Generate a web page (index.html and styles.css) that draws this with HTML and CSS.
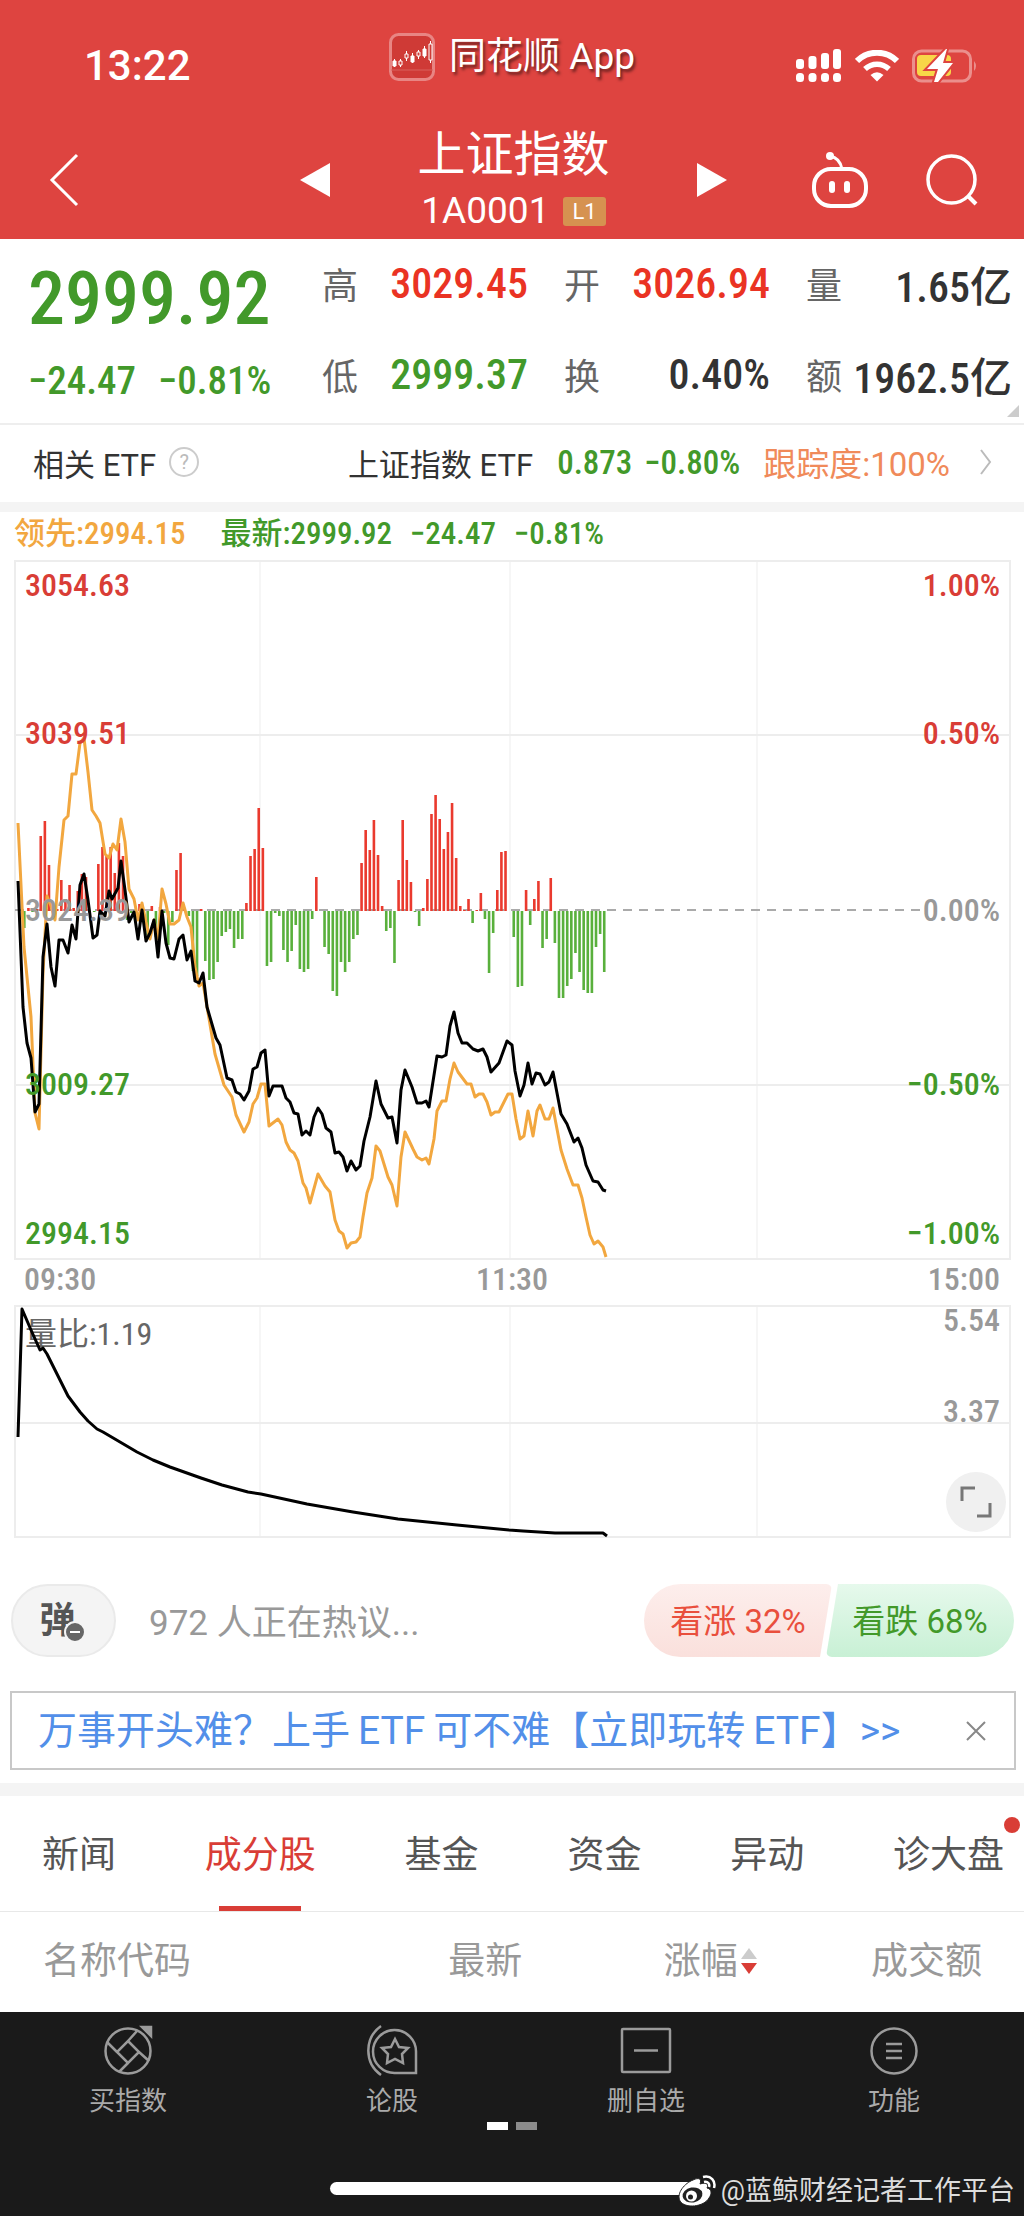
FILE: index.html
```html
<!DOCTYPE html>
<html lang="zh-CN">
<head>
    <meta charset="UTF-8">
    <meta name="viewport" content="width=device-width, initial-scale=1.0">
    <title>上证指数 1A0001</title>
    <link rel="stylesheet" href="styles.css">
</head>
<body>
    <header class="top">
        <div class="status">
            <span class="time">13:22</span>
            <div class="brand">
                <svg class="brand-logo" viewBox="0 0 46 48" width="46" height="48">
                    <rect x="1.5" y="1.5" width="43" height="45" rx="8" fill="#cf3a36" stroke="#e88583" stroke-width="3"/>
                    <path d="M2 37h42" stroke="#d9605c"/>
                    <g stroke="#fff" fill="none">
                        <path d="M5.500 26v8M11.500 26v8M17.500 18v10M23.500 20v10M29.500 17v9M35.500 13v12M41.500 8v22"/>
                        <path d="M4 28h3v5h-3zM22 23h3v6h-3zM34 16h3v7h-3z" fill="#fff"/>
                        <path d="M10 28h3v4h-3zM16 21h3v4h-3zM28 19h3v4h-3zM40 11h3v16h-3z" fill="#cf3a36"/>
                    </g>
                </svg>
                <span>同花顺 App</span>
            </div>
            <div class="status-icons">
                <svg viewBox="0 0 46 34" width="46" height="34" fill="#fff">
                    <rect x="0" y="10" width="8" height="10" rx="3"/>
                    <rect x="12.500" y="7" width="8" height="13" rx="3"/>
                    <rect x="25" y="4" width="8" height="16" rx="3"/>
                    <rect x="37" y="0" width="8" height="20" rx="3"/>
                    <rect x="0" y="24" width="8" height="9" rx="3.500"/>
                    <rect x="12.500" y="24" width="8" height="9" rx="3.500"/>
                    <rect x="25" y="24" width="8" height="9" rx="3.500"/>
                    <rect x="37" y="24" width="8" height="9" rx="3.500"/>
                </svg>
                <svg viewBox="0 0 44 32" width="44" height="32">
                    <path d="M2 11C13 0 31 0 42 11" fill="none" stroke="#fff" stroke-width="6"/>
                    <path d="M10 19C17 12.500 27 12.500 34 19" fill="none" stroke="#fff" stroke-width="5.500"/>
                    <path d="M15.500 25Q22 19.500 28.500 25L22 31.500z" fill="#fff"/>
                </svg>
                <svg viewBox="0 0 66 34" width="66" height="34">
                    <rect x="1.500" y="2" width="57" height="30" rx="8" fill="none" stroke="#eb8f8c" stroke-width="3"/>
                    <path d="M62 12q4 5 0 10z" fill="#eb8f8c"/>
                    <rect x="5" y="6" width="34" height="21" rx="4" fill="#f8d648"/>
                    <path d="M34 0L15 20h11l-4 13h4L41 14H31l4-14z" fill="#fff" stroke="#de4440" stroke-width="4" paint-order="stroke"/>
                </svg>
            </div>
        </div>
        <nav class="nav">
            <button aria-label="返回">
                <svg viewBox="0 0 30 54" width="30" height="54"><path d="M28 2L3 27l25 25" fill="none" stroke="#fff" stroke-width="3"/></svg>
            </button>
            <div class="nav-center">
                <button aria-label="上一个">
                    <svg viewBox="0 0 30 34" width="30" height="34"><path d="M30 0v34L0 17z" fill="#fff"/></svg>
                </button>
                <div class="nav-title">
                    <h1>上证指数</h1>
                    <p>1A0001 <span class="level">L1</span></p>
                </div>
                <button aria-label="下一个">
                    <svg viewBox="0 0 30 34" width="30" height="34"><path d="M0 0v34l30-17z" fill="#fff"/></svg>
                </button>
            </div>
            <div class="nav-tools">
                <button aria-label="助手">
                    <svg viewBox="0 0 56 56" width="56" height="56">
                        <rect x="2" y="17" width="52" height="37" rx="17" fill="none" stroke="#fff" stroke-width="4"/>
                        <path d="M18 4q10 2 12 13" fill="none" stroke="#fff" stroke-width="3"/>
                        <circle cx="18" cy="4" r="4" fill="#fff"/>
                        <rect x="17" y="29" width="6" height="12" rx="3" fill="#fff"/>
                        <rect x="32" y="29" width="6" height="12" rx="3" fill="#fff"/>
                    </svg>
                </button>
                <button aria-label="搜索">
                    <svg viewBox="0 0 52 52" width="52" height="52">
                        <circle cx="25.500" cy="25.500" r="23.500" fill="none" stroke="#fff" stroke-width="3.500"/>
                        <path d="M42 42l8 8" stroke="#fff" stroke-width="4"/>
                    </svg>
                </button>
            </div>
        </nav>
    </header>

    <section class="quote">
        <div class="price">
            <strong>2999.92</strong>
            <p><span>−24.47</span><span>−0.81%</span></p>
        </div>
        <dl class="stats">
            <div><dt>高</dt><dd class="up">3029.45</dd></div>
            <div><dt>开</dt><dd class="up">3026.94</dd></div>
            <div><dt>量</dt><dd>1.65亿</dd></div>
            <div><dt>低</dt><dd class="down">2999.37</dd></div>
            <div><dt>换</dt><dd>0.40%</dd></div>
            <div><dt>额</dt><dd>1962.5亿</dd></div>
        </dl>
        <span class="corner"></span>
    </section>

    <a class="etf" href="#">
        <span>相关 ETF</span>
        <span class="help">?</span>
        <span class="etf-name">上证指数 ETF</span>
        <span class="etf-num"><span>0.873</span><span>−0.80%</span></span>
        <span class="track">跟踪度:100%</span>
        <svg viewBox="0 0 12 26" width="12" height="26"><path d="M1 1l9 12-9 12" fill="none" stroke="#bbb" stroke-width="2"/></svg>
    </a>

    <section class="charts">
        <p class="legend">
            <span class="lead">领先:2994.15</span>
            <span class="last"><span>最新:2999.92</span><span>−24.47</span><span>−0.81%</span></span>
        </p>
        <svg class="chart" viewBox="0 0 1024 706">
            <g class="grid">
                <path d="M15 5H1010V703H15zM15 179H1010M15 529H1010"/>
                <path class="thin" d="M260 5V703M510 5V703M757 5V703"/>
            </g>
            <path class="zero" d="M15 354H922"/>
            <g id="bars"></g>
            <polyline class="line lead-line" points="18,267 24,391 31,461 35,557 39,573 43,417 47,340 51,350 55,364 59,311 64,264 68,260 72,218 76,218 80,187 84,182 88,216 92,254 96,260 100,267 105,298 109,302 113,288 117,294 121,263 125,286 129,333 134,343 138,364 142,347 146,366 150,383 154,364 158,383 162,333 166,348 170,368 174,368 179,364 183,347 187,361 191,371 195,411 199,430 203,427 215,498 224,529 232,541 236,559 244,576 249,566 253,548 257,542 261,528 265,528 269,570 278,563 282,569 286,586 290,594 294,597 298,605 303,627 306,632 310,647 318,618 325,630 330,636 335,664 339,675 343,678 347,692 351,687 356,686 360,681 363,661 367,637 372,622 376,590 380,595 388,621 392,629 397,650 401,601 405,576 413,593 417,601 422,604 426,602 429,608 434,583 437,555 442,545 446,545 450,523 454,507 458,516 467,528 471,528 475,541 479,538 483,538 487,546 491,559 495,556 499,556 508,538 512,538 516,563 520,583 524,580 528,555 533,580 537,555 540,549 545,563 549,563 553,552 561,594 567,613 573,629 578,629 582,642 586,661 590,679 594,688 598,685 603,691 606,701"/>
            <polyline class="line last-line" points="18,325 23,451 27,487 31,502 35,556 39,548 43,401 47,368 51,411 55,430 59,384 63,384 68,397 72,369 76,383 80,329 84,318 88,344 93,382 97,379 100,355 105,360 109,335 112,343 118,332 121,305 125,334 129,366 134,356 138,383 142,354 146,385 150,377 154,364 158,401 162,355 166,387 170,402 174,403 179,383 183,379 187,404 191,395 195,425 199,427 203,417 207,451 216,482 220,489 227,522 232,524 236,536 240,538 244,544 249,535 253,513 257,511 261,497 265,494 269,540 273,530 282,530 286,542 290,546 294,557 298,558 302,579 306,575 310,579 314,561 318,552 322,558 326,572 331,576 335,597 339,596 343,601 347,615 351,605 356,614 360,610 364,585 370,561 376,525 381,548 388,562 392,561 397,587 401,534 405,514 412,531 417,547 422,547 426,545 429,551 437,500 442,501 446,499 450,470 454,456 458,477 462,487 467,487 473,493 478,495 483,493 487,501 491,516 499,507 507,485 512,489 515,515 520,540 524,529 528,507 532,528 536,517 540,518 545,529 549,526 553,516 561,558 567,568 574,586 578,582 582,592 586,609 593,625 598,626 603,634 606,635"/>
            <g class="scale">
                <text class="up" x="25" y="40">3054.63</text>
                <text class="up" x="25" y="188">3039.51</text>
                <text class="flat" x="25" y="365">3024.39</text>
                <text class="down" x="25" y="539">3009.27</text>
                <text class="down" x="25" y="688">2994.15</text>
            </g>
            <g class="scale scale-right">
                <text class="up" x="1000" y="40">1.00%</text>
                <text class="up" x="1000" y="188">0.50%</text>
                <text class="flat" x="1000" y="365">0.00%</text>
                <text class="down" x="1000" y="539">−0.50%</text>
                <text class="down" x="1000" y="688">−1.00%</text>
            </g>
        </svg>
        <div class="times"><span>09:30</span><span>11:30</span><span>15:00</span></div>
        <div class="ratio">
            <svg class="chart" viewBox="0 0 1024 240">
                <g class="grid">
                    <path d="M15 6H1010V237H15zM15 123H1010"/>
                    <path class="thin" d="M260 6V237M510 6V237M757 6V237"/>
                </g>
                <g class="scale">
                    <text class="ratio-name" x="25" y="45">量比:1.19</text>
                </g>
                <g class="scale scale-right">
                    <text class="flat" x="1000" y="31">5.54</text>
                    <text class="flat" x="1000" y="122">3.37</text>
                </g>
                <polyline class="line last-line" points="18,137 22,9 31,30 40,50 43,48 47,54 59,78 68,96 80,112 88,121 97,129 103,132 120,142 137,152 153,160 170,167 201,178 222,185 248,192 261,194 307,204 353,212 398,219 457,225 509,230 523,231 555,233 603,233 607,236"/>
            </svg>
            <button class="expand" aria-label="全屏">
                <svg viewBox="0 0 32 32" width="32" height="32"><path d="M2 15V2h13M30 17v13H17" fill="none" stroke="#777" stroke-width="3"/></svg>
            </button>
        </div>
    </section>

    <section class="talk">
        <button class="danmu">弹
            <svg viewBox="0 0 22 22" width="22" height="22"><circle cx="11" cy="11" r="10" fill="#666" stroke="#f4f4f4" stroke-width="2"/><path d="M6 11h10" stroke="#fff" stroke-width="2"/></svg>
        </button>
        <p>972 人正在热议...</p>
        <div class="vote">
            <button class="bull">看涨 32%</button>
            <button class="bear">看跌 68%</button>
        </div>
    </section>

    <aside class="ad">
        <a href="#">万事开头难？上手&thinsp;ETF&thinsp;可不难【立即玩转&thinsp;ETF】&gt;&gt;</a>
        <button aria-label="关闭">
            <svg viewBox="0 0 20 20" width="20" height="20"><path d="M1 1l18 18M19 1L1 19" stroke="#888" stroke-width="2"/></svg>
        </button>
    </aside>

    <nav class="tabs">
        <a href="#">新闻</a>
        <a href="#" class="active">成分股</a>
        <a href="#">基金</a>
        <a href="#">资金</a>
        <a href="#">异动</a>
        <a href="#" class="has-dot">诊大盘</a>
    </nav>

    <table class="list">
        <thead>
            <tr>
                <th class="name">名称代码</th>
                <th class="latest">最新</th>
                <th class="sorted">涨幅<svg viewBox="0 0 18 26" width="18" height="26"><path d="M9 0l8 11H1z" fill="#ccc"/><path d="M9 26l8-11H1z" fill="#d93d36"/></svg></th>
                <th>成交额</th>
            </tr>
        </thead>
    </table>

    <footer class="bottom">
        <div class="tools">
            <button>
                <svg viewBox="0 0 52 52" width="52" height="52">
                    <circle cx="26" cy="27" r="22.500"/>
                    <path d="M26 17l11 11-11 11-11-11zM26 17l9-10M37 28l10 9M26 39l-9 9M15 28L5 18"/>
                    <path d="M40 3h9v9z" fill="#9b9b9b"/>
                </svg>
                <span>买指数</span>
            </button>
            <button>
                <svg viewBox="0 0 52 52" width="52" height="52">
                    <path d="M29 49h21V28a21.500 21.500 0 1 0-21 21z"/>
                    <path d="M15 2a30 30 0 0 0 0 49"/>
                    <path d="M29 15l4 8 9 1-6 6 1 9-8-4-8 4 1-9-6-6 9-1z"/>
                </svg>
                <span>论股</span>
            </button>
            <button>
                <svg viewBox="0 0 52 52" width="52" height="52">
                    <rect x="2" y="5" width="48" height="43" rx="1"/>
                    <path d="M14 26.500h24"/>
                </svg>
                <span>删自选</span>
            </button>
            <button>
                <svg viewBox="0 0 52 52" width="52" height="52">
                    <circle cx="26" cy="27" r="22.500"/>
                    <path d="M18 20h16M18 27h16M18 34h16"/>
                </svg>
                <span>功能</span>
            </button>
        </div>
        <div class="pages"><i class="on"></i><i></i></div>
        <div class="home-bar"></div>
        <div class="watermark">
            <svg viewBox="0 0 38 32" width="38" height="32">
                <path d="M15 5c6-3 9-1 7 4 6-2 9 0 7 4 5 1 5 6 2 10-5 9-24 11-29 3C-2 18 7 8 15 5z" fill="#fff" stroke="#222" stroke-width="1"/>
                <ellipse cx="14.500" cy="20" rx="10" ry="7.500" fill="#222" transform="rotate(-10 14.500 20)"/>
                <circle cx="13.500" cy="21" r="5.500" fill="#fff"/>
                <circle cx="12.500" cy="22" r="2.500" fill="#222"/>
                <path d="M26 7c4-1 6 2 5 5M25 2c8-2 13 4 11 11" fill="none" stroke="#fff" stroke-width="2.500"/>
            </svg>
            <span>@蓝鲸财经记者工作平台</span>
        </div>
    </footer>

    <script>
        // one bar per minute: above zero red, below zero green
        const minutes = [
            -17, 3, -1, 2, 75, 90, 46, 0, 2, 31, 12, 26, 3, 20, 37, 34, 0, -1, 47, 64,
            55, 64, 38, 68, 55, -9, -2, -1, 7, -2, -24, 5, -26, 4, -2, -34, -11, 41, 58, 3,
            -5, -60, -65, 2, -50, -69, -68, -51, -25, -21, -18, -37, -28, -28, 8, 55, 62, 103, 63, -55,
            -51, -2, -5, -39, -51, -40, -14, -58, -61, -58, -8, 34, 0, -36, -43, -80, -85, -51, -61, -51,
            -28, -24, 48, 81, 61, 91, 56, 5, -20, -17, -52, 31, 91, 51, 29, -1, -15, 3, 32, 97,
            116, 92, 62, 79, 108, 53, 5, 1, 12, -12, 1, 18, -8, -62, -22, 21, 59, 60, 0, -26,
            -76, -75, 21, -14, 12, 30, -37, -28, 33, -32, -87, -87, -75, -68, -42, -61, -79, -82, -82, -36,
            -23, -61
        ];
        const zeroY = 355;
        const step = 4.113;
        const bars = document.getElementById("bars");

        minutes.forEach((value, i) => {
            const bar = document.createElementNS("http://www.w3.org/2000/svg", "rect");
            bar.setAttribute("x", 23 + i * step);
            bar.setAttribute("y", value > 0 ? zeroY - value : zeroY);
            bar.setAttribute("width", 2.6);
            bar.setAttribute("height", Math.abs(value));
            bar.setAttribute("fill", value > 0 ? "#ea3a2e" : "#59b03c");
            bars.appendChild(bar);
        });
    </script>
</body>
</html>
```
FILE: styles.css
```css
:root {
    --red: #de4440;
    --up: #d93d36;
    --down: #42992a;
    --num: "Roboto Condensed", "Liberation Sans Narrow", Roboto, "Noto Sans CJK SC", sans-serif;
}
* {
    box-sizing: border-box;
}
body {
    margin: 0;
    background: #fff;
    color: #333;
    font-family: Roboto, "Noto Sans CJK SC", sans-serif;
    font-size: 31px;
}
h1, p, dl, dd {
    margin: 0;
}
a {
    color: inherit;
    text-decoration: none;
}
button {
    padding: 0;
    border: none;
    background: none;
    color: inherit;
    font: inherit;
    cursor: pointer;
}
svg {
    display: block;
}

/* header */
.top {
    background: var(--red);
    color: #fff;
}
.status {
    display: grid;
    grid-template-columns: 1fr auto 1fr;
    align-items: center;
    height: 121px;
    padding: 10px 46px 0 84px;
}
.time {
    font-size: 42px;
    font-weight: 500;
}
.brand {
    display: flex;
    align-items: center;
    gap: 14px;
    margin: 0 38px 18px 0;
    font-size: 37px;
    line-height: 48px;
    text-shadow: 2px 3px 3px rgba(0, 0, 0, 0.5);
}
.status-icons {
    display: flex;
    justify-content: flex-end;
    align-items: center;
    gap: 13px;
}
.nav {
    display: grid;
    grid-template-columns: 1fr 428px 1fr;
    align-items: center;
    justify-items: start;
    height: 118px;
    padding: 0 46px 0 49px;
}
.nav-center {
    display: flex;
    justify-content: space-between;
    align-items: center;
    width: 100%;
}
.nav-title {
    padding-top: 4px;
    text-align: center;
}
.nav-title h1 {
    font-size: 48px;
    font-weight: 400;
    line-height: 58px;
}
.nav-title p {
    display: flex;
    justify-content: center;
    align-items: center;
    gap: 14px;
    font-size: 37px;
    line-height: 54px;
}
.level {
    padding: 0 9px;
    border-radius: 3px;
    background: #d69250;
    font-size: 22px;
    line-height: 29px;
}
.nav-tools {
    display: flex;
    justify-self: end;
    align-items: center;
    gap: 58px;
}

/* quote */
.up {
    color: #ea3323;
    fill: var(--up);
}
.down {
    color: var(--down);
    fill: var(--down);
}
.flat {
    fill: #999;
}
.quote {
    position: relative;
    display: grid;
    grid-template-columns: 256px 1fr;
    gap: 38px;
    height: 186px;
    padding: 0 12px 0 28px;
    border-bottom: 2px solid #eee;
    font-family: var(--num);
}
.price {
    color: var(--down);
    font-weight: 500;
}
.price strong {
    display: block;
    padding-top: 16px;
    font-size: 74px;
    font-weight: 500;
    line-height: 88px;
}
.price p {
    display: flex;
    gap: 22px;
    font-size: 39px;
    line-height: 76px;
}
.stats {
    display: grid;
    grid-template-columns: repeat(3, 1fr);
    grid-template-rows: 88px 94px;
    column-gap: 36px;
}
.stats div {
    display: flex;
    justify-content: space-between;
    align-items: center;
}
.stats dt {
    color: #666;
    font-size: 36px;
}
.stats dd {
    font-size: 42px;
    font-weight: 500;
    white-space: nowrap;
}
.corner {
    position: absolute;
    right: 5px;
    bottom: 6px;
    border-left: 12px solid transparent;
    border-bottom: 12px solid #ccc;
}

.etf {
    display: flex;
    align-items: center;
    height: 87px;
    padding: 0 32px 3px 33px;
    border-bottom: 10px solid #f4f4f4;
}
.help {
    width: 30px;
    height: 30px;
    margin-left: 13px;
    border: 2px solid #ccc;
    border-radius: 50%;
    color: #bbb;
    font-size: 20px;
    line-height: 26px;
    text-align: center;
}
.etf-name {
    margin-left: auto;
}
.etf-num {
    display: flex;
    gap: 12px;
    margin: 0 23px 0 24px;
    color: var(--down);
    font-family: var(--num);
    font-size: 33px;
    font-weight: 500;
}
.track {
    margin-right: 30px;
    color: #f08a5a;
    font-size: 33px;
}

/* charts */
.legend {
    display: flex;
    gap: 35px;
    padding-left: 14px;
    font-family: var(--num);
    font-size: 31px;
    font-weight: 500;
    line-height: 44px;
}
.lead {
    color: #f2a73f;
}
.last {
    display: flex;
    gap: 18px;
    color: var(--down);
}
.chart {
    width: 100%;
    height: auto;
}
.grid {
    fill: none;
    stroke: #ededed;
    stroke-width: 2;
}
.grid .thin {
    stroke-width: 1;
}
.zero {
    stroke: #aaa;
    stroke-dasharray: 9 7;
    stroke-width: 2;
}
.line {
    fill: none;
    stroke-linejoin: round;
    stroke-width: 3;
}
.lead-line {
    stroke: #f2a73f;
}
.last-line {
    stroke: #000;
}
.scale {
    font-family: var(--num);
    font-size: 32px;
    font-weight: 500;
}
.scale-right {
    text-anchor: end;
}
.ratio-name {
    fill: #666;
    font-weight: 400;
}
.times {
    display: flex;
    justify-content: space-between;
    padding: 0 24px 4px;
    color: #999;
    font-family: var(--num);
    font-size: 32px;
    font-weight: 500;
    line-height: 34px;
}
.ratio {
    position: relative;
}
.expand {
    position: absolute;
    right: 18px;
    bottom: 8px;
    display: grid;
    place-items: center;
    width: 60px;
    height: 60px;
    border-radius: 50%;
    background: #f0f0f0;
}

/* discussion */
.talk {
    display: flex;
    align-items: center;
    padding: 44px 10px 34px 11px;
}
.danmu {
    position: relative;
    width: 105px;
    height: 73px;
    padding-right: 12px;
    border: 2px solid #eaeaea;
    border-radius: 37px;
    background: #f4f4f4;
    color: #555;
    font-size: 36px;
    font-weight: 700;
    line-height: 60px;
}
.danmu svg {
    position: absolute;
    right: 28px;
    bottom: 12px;
}
.talk p {
    margin-left: 33px;
    padding-bottom: 3px;
    color: #999;
    font-size: 35px;
}
.vote {
    display: flex;
    margin-left: auto;
}
.vote button {
    width: 188px;
    height: 73px;
    padding-bottom: 3px;
    font-size: 33px;
}
.vote .bull {
    border-radius: 37px 6px 6px 37px;
    background: linear-gradient(#fdeeec, #fae0dc);
    clip-path: polygon(0 0, 100% 0, 176px 100%, 0 100%);
    color: #e94f3d;
}
.vote .bear {
    margin-left: -6px;
    border-radius: 6px 37px 37px 6px;
    background: linear-gradient(#e6f9ec, #c8f0d5);
    clip-path: polygon(12px 0, 100% 0, 100% 100%, 0 100%);
    color: var(--down);
}

.ad {
    display: flex;
    justify-content: space-between;
    align-items: center;
    height: 79px;
    margin: 0 8px 13px 10px;
    padding: 0 28px 0 26px;
    border: 2px solid #c8c8c8;
    color: #528fe9;
    font-size: 39px;
    line-height: 72px;
    white-space: nowrap;
}

/* tabs and list */
.tabs {
    display: flex;
    justify-content: space-between;
    height: 129px;
    padding: 0 20px 0 42px;
    border-top: 13px solid #f4f4f4;
    border-bottom: 1px solid #e8e8e8;
    color: #555;
    font-size: 37px;
    line-height: 119px;
}
.tabs a {
    position: relative;
}
.tabs .active {
    color: var(--up);
}
.tabs .active::after {
    content: "";
    position: absolute;
    left: 50%;
    bottom: 0;
    width: 82px;
    height: 5px;
    margin-left: -41px;
    background: var(--up);
}
.has-dot::after {
    content: "";
    position: absolute;
    top: 21px;
    right: -16px;
    width: 16px;
    height: 16px;
    border-radius: 50%;
    background: var(--up);
}
.list {
    width: 100%;
    height: 100px;
    border-collapse: collapse;
    table-layout: fixed;
}
.list th {
    padding: 0 0 8px;
    color: #999;
    font-size: 37px;
    font-weight: 400;
    text-align: right;
}
.list .name {
    width: 29%;
    padding-left: 43px;
    text-align: left;
}
.list .latest {
    width: 22%;
}
.list .sorted {
    width: 23%;
}
.list .sorted svg {
    display: inline-block;
    margin-left: 2px;
}
.list th:last-child {
    padding-right: 42px;
}

/* bottom bar */
.bottom {
    position: relative;
    height: 204px;
    background: #1a1a1a;
    color: #aaa;
}
.tools {
    display: grid;
    grid-template-columns: 256fr 272fr 236fr 260fr;
    padding-top: 12px;
}
.tools button {
    display: flex;
    flex-direction: column;
    align-items: center;
    gap: 7px;
    font-size: 26px;
    line-height: 36px;
}
.tools svg {
    fill: none;
    stroke: #9b9b9b;
    stroke-width: 2.5;
}
.pages {
    display: flex;
    justify-content: center;
    gap: 8px;
    padding-top: 3px;
}
.pages i {
    width: 21px;
    height: 8px;
    background: #8c8c8c;
}
.pages .on {
    background: #fff;
}
.home-bar {
    width: 364px;
    height: 13px;
    margin: 52px auto 0;
    border-radius: 7px;
    background: #fff;
}
.watermark {
    position: absolute;
    right: 9px;
    bottom: 7px;
    display: flex;
    align-items: center;
    gap: 5px;
    color: #ddd;
    font-size: 27px;
    line-height: 36px;
}
```
